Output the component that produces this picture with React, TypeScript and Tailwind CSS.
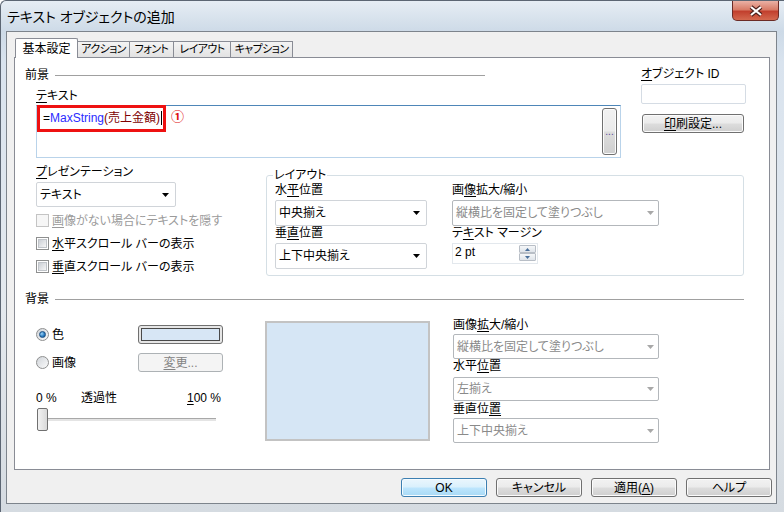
import type { ReactNode } from 'react';

const font = "font-['Liberation_Sans','Noto_Sans_CJK_JP',sans-serif] [font-feature-settings:'palt']";

const btnNormal =
  'flex items-center justify-center whitespace-nowrap rounded-[3px] border border-[#707070] bg-[linear-gradient(#f2f2f2_0%,#ebebeb_49%,#dddddd_51%,#cfcfcf_100%)] shadow-[inset_0_0_0_1px_#fbfbfb]';
const btnPrimary =
  'flex items-center justify-center whitespace-nowrap rounded-[3px] border border-[#3c7fb1] bg-[linear-gradient(#eaf6fd_0%,#d9f0fc_49%,#bee6fd_51%,#a7d9f5_100%)] shadow-[inset_0_0_0_1px_#f4fbff]';
const btnDisabled =
  'flex items-center justify-center whitespace-nowrap rounded-[3px] border border-[#adb2b5] bg-[#f4f4f4] text-[#838383]';

const tabs = [
  { label: 'アクション', w: 'w-[53px]' },
  { label: 'フォント', w: 'w-[45px]' },
  { label: 'レイアウト', w: 'w-[58px]' },
  { label: 'キャプション', w: 'w-[63px]' },
];

function U({ children }: { children: ReactNode }) {
  return <span className="underline decoration-1 underline-offset-[2px]">{children}</span>;
}

function Arrow({ disabled = false }: { disabled?: boolean }) {
  return (
    <svg width="7" height="4" viewBox="0 0 7 4" className="shrink-0">
      <path d="M0 0h7L3.5 4z" fill={disabled ? '#a8a8a8' : '#000'} />
    </svg>
  );
}

function Combo({ value, className, disabled = false }: { value: string; className: string; disabled?: boolean }) {
  return (
    <div
      className={`flex items-center rounded-[2px] border bg-white pl-[3px] ${
        disabled ? 'border-[#b3b7bb] pr-[4px] text-[#8a8a8a]' : 'border-[#d0d4d9] pr-[6px] text-black'
      } ${className}`}
    >
      <span className="flex-1 whitespace-nowrap">{value}</span>
      <Arrow disabled={disabled} />
    </div>
  );
}

function Check({ disabled = false, children }: { disabled?: boolean; children: ReactNode }) {
  return (
    <div className={`flex h-[13px] items-center ${disabled ? 'text-[#9b9b9b]' : 'text-black'}`}>
      <div
        className={`mr-[3px] flex h-[13px] w-[13px] items-center justify-center border ${
          disabled ? 'border-[#c4c4c4] bg-[#f6f6f6]' : 'border-[#8e8f8f] bg-white'
        }`}
      >
        {!disabled && <div className="h-[9px] w-[9px] border border-[#c0c4c9] bg-[linear-gradient(135deg,#cbcfd5,#f6f6f6)]" />}
      </div>
      <span className="whitespace-nowrap">{children}</span>
    </div>
  );
}

function Radio({ checked = false }: { checked?: boolean }) {
  return (
    <div className="flex h-[13px] w-[13px] items-center justify-center rounded-full border border-[#8e8f8f] bg-[linear-gradient(135deg,#d0d4d9,#fbfbfb)]">
      {checked && (
        <div className="h-[7px] w-[7px] rounded-full border border-[#1b4f82] bg-[radial-gradient(circle_at_35%_35%,#9fd4f7,#2c7fc4_55%,#134f86)]" />
      )}
    </div>
  );
}

export default function App() {
  return (
    <div
      className={`${font} relative h-[512px] w-[784px] overflow-hidden rounded-tl-[6px] border-l border-t border-[#5c6673] bg-[linear-gradient(180deg,#e6edf4_0%,#cddae7_6%,#d9e3ee_12%,#e4e9ee_60%,#d5dbe1_100%)] text-[12px] leading-[12px] text-black`}
    >
      {/* title bar */}
      <div className="flex h-[30px] items-center">
        <span className="ml-[6px] mt-[2px] text-[14px] leading-[14px] text-black">テキスト オブジェクトの追加</span>
        <div className="ml-auto mr-[5px] flex h-[20px] w-[47px] items-center justify-center self-start rounded-b-[5px] border border-t-0 border-[#6b2b26] bg-[linear-gradient(#eab1a5_0%,#d87c68_45%,#c2402e_55%,#d4694f_100%)]">
          <svg width="16" height="12" viewBox="0 0 16 12">
            <path d="M3 2l10 8M13 2L3 10" stroke="#4a1f1b" strokeWidth="4.2" />
            <path d="M3 2l10 8M13 2L3 10" stroke="#fff" strokeWidth="2.2" />
          </svg>
        </div>
      </div>

      {/* client area */}
      <div className="ml-[5px] h-[473px] w-[771px] border border-[#7d848c] bg-[#f0f0f0]">
        <div className="pl-[7px] pt-[6px]">
          {/* tabs */}
          <div className="relative z-10 flex h-[19px] items-end pl-[1px]">
            <div className="-mb-px flex h-[20px] w-[63px] items-center justify-center whitespace-nowrap rounded-t-[2px] border border-b-0 border-[#898c95] bg-white">
              基本設定
            </div>
            {tabs.map((t) => (
              <div
                key={t.label}
                className={`-ml-px flex h-[16px] items-center justify-center whitespace-nowrap border border-b-0 border-[#898c95] bg-[linear-gradient(#f4f4f4,#e2e2e2)] text-[11px] leading-[11px] tracking-[-0.6px] ${t.w}`}
              >
                {t.label}
              </div>
            ))}
          </div>

          {/* panel */}
          <div className="flex h-[413px] w-[756px] flex-col border border-[#898c95] bg-white pl-[10px]">
            {/* foreground */}
            <div className="flex items-start">
              <div className="w-[596px]">
                <div className="mt-[11px] flex h-[12px] items-center">
                  <span>前景</span>
                  <div className="ml-[6px] h-px w-[430px] bg-[#a0a0a0]" />
                </div>
                <div className="ml-[11px] mt-[9px] h-[12px]">
                  <U>テ</U>キスト
                </div>
                <div className="relative ml-[11px] mt-[3px] flex h-[53px] w-[585px] border border-[#b9d3ea] border-t-[#4e86b8] bg-white">
                  <div className="flex-1 pl-[6px] pt-[5px]">
                    <span>=</span>
                    <span className="text-[#2b2bff]">MaxString</span>
                    <span className="text-[#800000]">(売上金額)</span>
                    <span className="ml-[1px] inline-block h-[14px] w-px bg-black align-[-3px]" />
                  </div>
                  <div className={`${btnNormal} my-[2px] mr-[3px] w-[15px] text-[10px] leading-[10px] text-[#5a4a9a]`}>...</div>
                  <div className="absolute left-0 top-[-1px] h-[27px] w-[129px] border-[3px] border-[#ee1111]" />
                  <span className="absolute left-[134px] top-[4px] text-[13px] leading-[13px] font-bold text-[#e01010]">①</span>
                </div>
              </div>
              <div className="ml-[20px] w-[105px]">
                <div className="mt-[10px] h-[12px] whitespace-nowrap">
                  <U>オ</U>ブジェクト ID
                </div>
                <div className="mt-[4px] h-[20px] w-[105px] rounded-[2px] border border-[#d5dce4] bg-white" />
                <div className={`${btnNormal} ml-[1px] mt-[10px] h-[19px] w-[102px]`}>
                  <U>印</U>刷設定...
                </div>
              </div>
            </div>

            {/* presentation + layout */}
            <div className="mt-[8px] flex items-start">
              <div className="ml-[11px] w-[230px]">
                <div className="h-[12px]">
                  <U>プ</U>レゼンテーション
                </div>
                <Combo value="テキスト" className="mt-[4px] h-[25px] w-[140px]" />
                <div className="mt-[7px]">
                  <Check disabled>
                    <U>画</U>像がない場合にテキストを隠す
                  </Check>
                </div>
                <div className="mt-[10px]">
                  <Check>
                    <U>水</U>平スクロール バーの表示
                  </Check>
                </div>
                <div className="mt-[10px]">
                  <Check>
                    <U>垂</U>直スクロール バーの表示
                  </Check>
                </div>
              </div>
              <fieldset className="mt-[3px] w-[478px] rounded-[3px] border border-[#d5dfe5] px-[8px] pb-[6px]">
                <legend className="-ml-[2px] px-[1px] leading-[12px]">レイアウト</legend>
                <div className="flex pt-[3px]">
                  <div className="w-[152px]">
                    <div className="h-[12px]">
                      水<U>平</U>位置
                    </div>
                    <Combo value="中央揃え" className="mt-[4px] h-[26px] w-[152px]" />
                    <div className="mt-px h-[12px]">
                      垂<U>直</U>位置
                    </div>
                    <Combo value="上下中央揃え" className="mt-[4px] h-[26px] w-[152px]" />
                  </div>
                  <div className="ml-[25px] w-[207px]">
                    <div className="h-[12px]">
                      画<U>像</U>拡大/縮小
                    </div>
                    <Combo value="縦横比を固定して塗りつぶし" disabled className="mt-[4px] h-[26px] w-[207px]" />
                    <div className="mt-px h-[12px]">
                      テ<U>キ</U>スト マージン
                    </div>
                    <div className="mt-[4px] flex h-[21px] w-[86px] items-start border border-[#e3e8ed] bg-white">
                      <span className="flex-1 pl-[2px] pt-[2px]">2 pt</span>
                      <div className="mr-px mt-px flex flex-col">
                        <div className="flex h-[8px] w-[17px] items-center justify-center rounded-[1px] border border-[#b8bec6] bg-[linear-gradient(#f5f7f9,#dfe4ea)]">
                          <svg width="5" height="3" viewBox="0 0 5 3">
                            <path d="M0 3h5L2.5 0z" fill="#4a6f9a" />
                          </svg>
                        </div>
                        <div className="flex h-[8px] w-[17px] items-center justify-center rounded-[1px] border border-[#b8bec6] bg-[linear-gradient(#f5f7f9,#dfe4ea)]">
                          <svg width="5" height="3" viewBox="0 0 5 3">
                            <path d="M0 0h5L2.5 3z" fill="#4a6f9a" />
                          </svg>
                        </div>
                      </div>
                    </div>
                  </div>
                </div>
              </fieldset>
            </div>

            {/* background */}
            <div className="mt-[17px] flex h-[12px] items-center">
              <span>背景</span>
              <div className="ml-[6px] h-px w-[689px] bg-[#a0a0a0]" />
            </div>
            <div className="mt-[14px] flex items-start">
              <div className="ml-[11px] w-[187px]">
                <div className="mt-[6px] flex h-[19px] items-center">
                  <Radio checked />
                  <span className="ml-[3px]">色</span>
                  <div className="ml-auto h-[19px] w-[85px] rounded-[3px] border border-[#707070] bg-[#e6e6e6] p-[2px]">
                    <div className="h-full w-full border border-[#4a4a4a] bg-[#d7e6f5]" />
                  </div>
                </div>
                <div className="mt-[9px] flex h-[19px] items-center">
                  <Radio />
                  <span className="ml-[3px]">画像</span>
                  <div className={`${btnDisabled} ml-auto h-[19px] w-[85px]`}>
                    <U>変</U>更...
                  </div>
                </div>
                <div className="mt-[20px] flex h-[12px] items-center whitespace-nowrap">
                  <span className="w-[45px]">0 %</span>
                  <span className="w-[106px]">透過性</span>
                  <span>
                    <U>1</U>00 %
                  </span>
                </div>
                <div className="mt-[4px] flex w-[180px] items-center">
                  <div className="ml-px h-[23px] w-[11px] rounded-[2px] border border-[#707070] bg-[linear-gradient(90deg,#f2f2f2,#d9d9d9)]" />
                  <div className="h-[3px] flex-1 border-t border-[#a8a8a8] bg-[#e4e4e4]" />
                </div>
              </div>
              <div className="ml-[42px] mt-[2px] h-[120px] w-[165px] border-2 border-[#c3c3c3] bg-[#d6e6f5]" />
              <div className="ml-[23px] w-[206px]">
                <div className="h-[12px]">
                  画像<U>拡</U>大/縮小
                </div>
                <Combo value="縦横比を固定して塗りつぶし" disabled className="mt-[3px] h-[25px] w-[206px]" />
                <div className="mt-px h-[12px]">
                  水平<U>位</U>置
                </div>
                <Combo value="左揃え" disabled className="mt-[5px] h-[24px] w-[206px]" />
                <div className="mt-[2px] h-[12px]">
                  垂直位<U>置</U>
                </div>
                <Combo value="上下中央揃え" disabled className="mt-[3px] h-[25px] w-[206px]" />
              </div>
            </div>
          </div>
        </div>

        {/* buttons */}
        <div className="mt-[8px] flex justify-end gap-[9px] pr-[4px]">
          <div className={`${btnPrimary} h-[19px] w-[86px]`}>OK</div>
          <div className={`${btnNormal} h-[19px] w-[86px]`}>キャンセル</div>
          <div className={`${btnNormal} h-[19px] w-[86px]`}>
            適用(<U>A</U>)
          </div>
          <div className={`${btnNormal} h-[19px] w-[86px]`}>ヘルプ</div>
        </div>
      </div>
    </div>
  );
}
